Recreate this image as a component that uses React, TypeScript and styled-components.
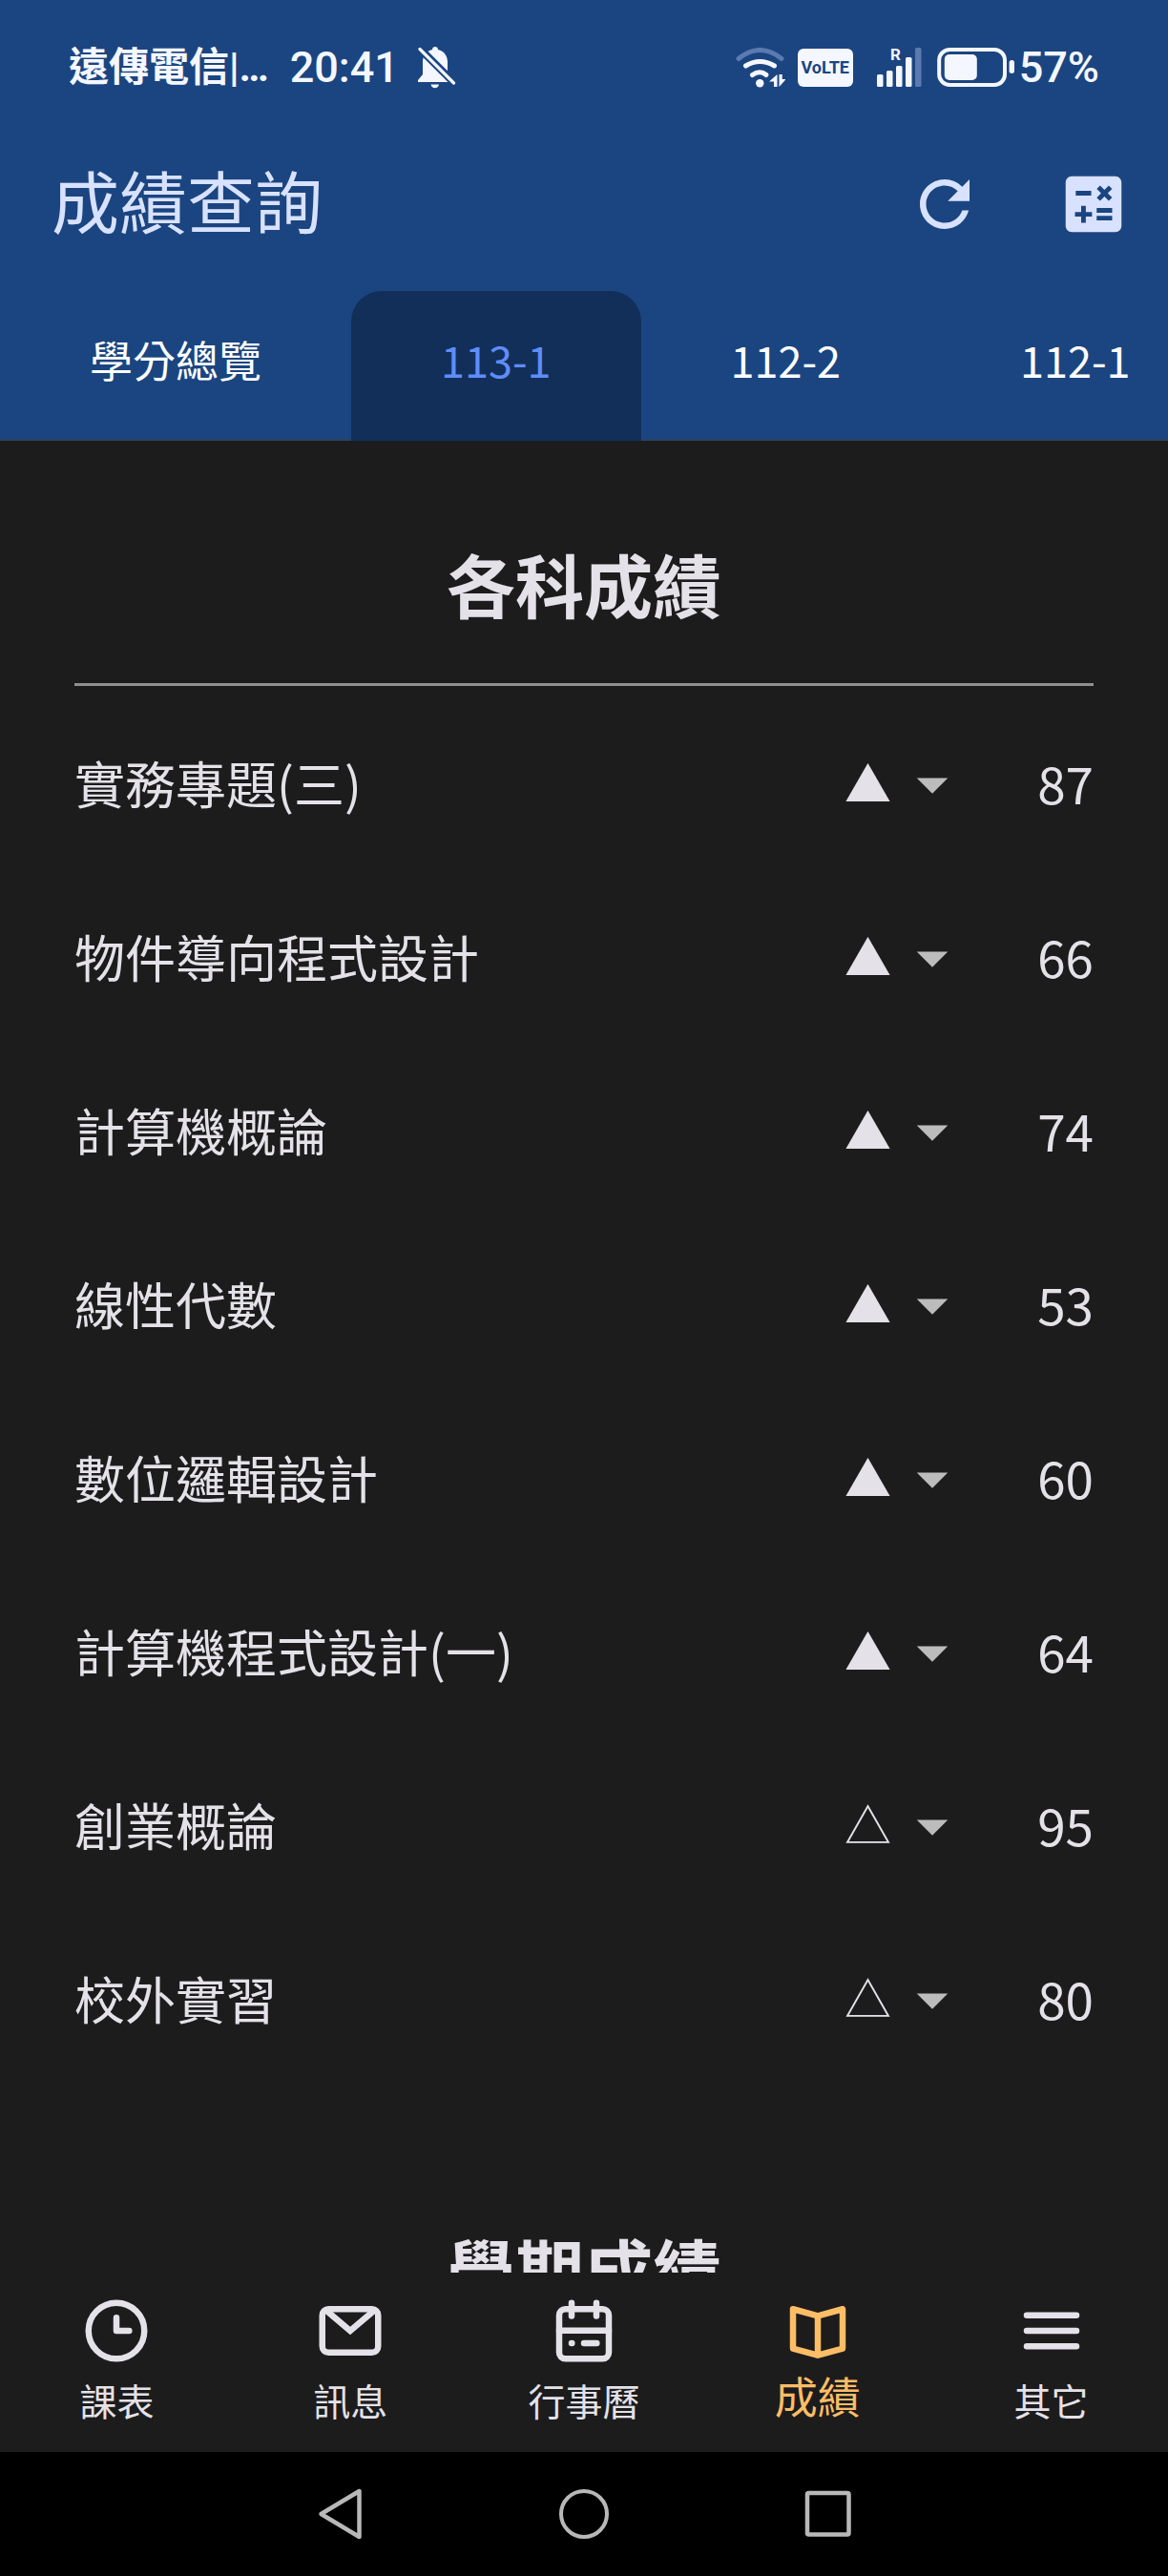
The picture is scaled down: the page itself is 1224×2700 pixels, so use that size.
import React, { useState } from "react";
import styled, { createGlobalStyle } from "styled-components";
import { MdArrowDropDown, MdCalculate, MdRefresh } from "react-icons/md";

const color = {
  header: "#1b4580",
  headerDark: "#122f5a",
  headerLine: "#2e4063",
  headerText: "#d8e2ff",
  accent: "#5f8df8",
  surface: "#1c1c1d",
  text: "#e4e2e8",
  rule: "#8f8e92",
  arrow: "#bcbcbc",
  selected: "#fbbd66",
};

const GlobalStyle = createGlobalStyle`
  * { box-sizing: border-box; }
  body {
    margin: 0;
    background: ${color.surface};
    color: ${color.text};
    font-family: "Noto Sans CJK TC", "Noto Sans", sans-serif;
  }
  button, select { font-family: inherit; }
`;

const Screen = styled.div`
  display: flex;
  flex-direction: column;
  height: 100vh;
`;

const Header = styled.header`
  flex: none;
  background: ${color.header};
`;

const StatusBar = styled.div`
  display: flex;
  align-items: center;
  height: 123px;
  padding: 18px 72px 0;
  color: #f4f7ff;
  font-family: Roboto, "Noto Sans CJK TC", sans-serif;
  font-weight: 500;
  font-size: 45px;
  line-height: 48px;
  white-space: nowrap;
`;

const Carrier = styled.span`
  font-weight: 700;
  font-size: 42px;
`;

const Clock = styled.time`
  margin: 0 20px 0 22px;
`;

const StatusIcons = styled.div`
  display: flex;
  align-items: center;
  margin-left: auto;
`;

const Volte = styled.span`
  width: 58px;
  height: 40px;
  margin: 0 24px 0 13px;
  border-radius: 6px;
  background: #f4f7ff;
  color: ${color.header};
  font-weight: 700;
  font-size: 18px;
  line-height: 40px;
  text-align: center;
`;

const Battery = styled.svg`
  margin: 0 5px 0 16px;
`;

const AppBar = styled.div`
  display: flex;
  align-items: center;
  height: 182px;
  padding-left: 54px;
  color: ${color.headerText};
`;

const Title = styled.h1`
  flex: 1;
  margin: 0;
  padding-bottom: 12px;
  font-weight: 400;
  font-size: 71px;
  line-height: 104px;
`;

const IconButton = styled.button`
  display: flex;
  align-items: center;
  justify-content: center;
  width: 156px;
  height: 156px;
  padding: 0;
  border: 0;
  background: none;
  color: inherit;
`;

const Tabs = styled.div`
  display: flex;
  overflow: hidden;
`;

const Tab = styled.button<{ $active: boolean }>`
  flex: none;
  height: 157px;
  padding: 0 94px 12px;
  border: 0;
  border-bottom: 2px solid ${(p) => (p.$active ? color.headerDark : color.headerLine)};
  border-radius: ${(p) => (p.$active ? "32px 32px 0 0" : "0")};
  background: ${(p) => (p.$active ? color.headerDark : "transparent")};
  color: ${(p) => (p.$active ? color.accent : "#fff")};
  font-size: 45px;
  line-height: 66px;
`;

const Content = styled.main`
  flex: 1;
  min-height: 0;
  padding: 93px 78px 0;
  overflow-y: auto;
  scrollbar-width: none;
`;

const Section = styled.section`
  & + & {
    margin-top: 132px;
  }
`;

const SectionTitle = styled.h2`
  margin: 0 0 14px;
  padding-bottom: 49px;
  border-bottom: 3px solid ${color.rule};
  font-weight: 700;
  font-size: 72px;
  line-height: 112px;
  text-align: center;
`;

const GradeTable = styled.table`
  width: 100%;
  border-collapse: collapse;
  font-size: 53px;
  line-height: 78px;
`;

const Course = styled.th`
  height: 182px;
  padding: 0 0 8px;
  font-weight: 400;
  text-align: left;
`;

const KindCell = styled.td`
  width: 133px;
  padding: 0 0 4px;
`;

const Score = styled.td`
  width: 130px;
  padding: 0 0 8px;
  text-align: right;
`;

const Picker = styled.div`
  position: relative;
  height: 78px;

  svg {
    position: absolute;
    top: 0;
    right: 0;
    color: ${color.arrow};
    pointer-events: none;
  }
`;

const Kind = styled.select`
  display: block;
  width: 100%;
  height: 78px;
  padding: 0 0 6px 2px;
  border: 0;
  appearance: none;
  background: transparent;
  color: ${color.text};
  font-size: 49px;
  line-height: 72px;
`;

const BottomNav = styled.nav`
  display: grid;
  grid-template-columns: repeat(5, 1fr);
  flex: none;
  height: 188px;
`;

const NavItem = styled.a<{ $active: boolean }>`
  display: flex;
  flex-direction: column;
  align-items: center;
  padding-top: 22px;
  color: ${(p) => (p.$active ? color.selected : color.text)};
  font-size: ${(p) => (p.$active ? 45 : 39)}px;
  line-height: ${(p) => (p.$active ? 58 : 66)}px;
  text-decoration: none;
`;

const SystemBar = styled.div`
  display: flex;
  justify-content: center;
  flex: none;
  height: 130px;
  background: #000;
`;

const SystemButton = styled.button`
  display: flex;
  align-items: center;
  justify-content: center;
  width: 256px;
  padding: 0;
  border: 0;
  background: none;
  color: #b8b8b8;
`;

const BellOffIcon = () => (
  <svg width="40" height="44" viewBox="0 0 40 44" aria-label="靜音">
    <path
      fill="currentColor"
      d="M18 0c1.800 0 3 1.200 3 3C27.500 4.500 31 9.500 31 16v13l3 6v2H0v-2l5-6V16C5 9.500 8.500 4.500 15 3c0-1.800 1.200-3 3-3z"
    />
    <path fill="currentColor" d="M13.500 39.500h8.500c-.4 2.400-2 3.700-4.200 3.700s-3.900-1.300-4.300-3.700z" />
    <path d="M-1 -1L41 41" stroke={color.header} strokeWidth="8" />
    <path d="M2 2.500L37.500 38" stroke="currentColor" strokeWidth="3.200" strokeLinecap="round" />
  </svg>
);

const WifiIcon = () => (
  <svg width="52" height="42" viewBox="0 0 52 42" fill="none" strokeWidth="5" strokeLinecap="round" aria-label="Wi-Fi">
    <path d="M3 11.500Q25.300-6.500 48 11.500" stroke="#5a7ab0" />
    <path d="M10.500 19Q25.300 10 40.500 19" stroke="currentColor" />
    <path d="M17.500 28.500Q25.300 23 32 28.500" stroke="currentColor" />
    <circle cx="25.300" cy="37.300" r="4.200" fill="currentColor" />
    <path d="M43.500 28v13H40v-5.500h-5zM45.500 41V28h3.200v5h4z" fill="currentColor" />
  </svg>
);

const bars = [
  { x: 1, y: 28, on: true },
  { x: 11, y: 24, on: true },
  { x: 21, y: 19, on: true },
  { x: 31, y: 10, on: true },
  { x: 41, y: 0, on: false },
];

const SignalIcon = () => (
  <svg width="48" height="42" viewBox="0 0 48 42" overflow="visible" fill="currentColor" aria-label="訊號">
    {bars.map((b) => (
      <rect key={b.x} x={b.x} y={b.y} width="6.500" height={41 - b.y} rx="1.500" fill={b.on ? undefined : "#5a7ab0"} />
    ))}
    <text x="15" y="13" fontSize="17" fontWeight="700">
      R
    </text>
  </svg>
);

const BatteryIcon = () => (
  <Battery width="81" height="42" viewBox="0 0 81 42" aria-label="電量">
    <rect x="2.200" y="2" width="68.800" height="37" rx="11" fill="none" stroke="currentColor" strokeWidth="4" />
    <rect x="7.800" y="7" width="34" height="27" rx="5" fill="currentColor" />
    <rect x="75.600" y="13" width="5.400" height="14" rx="2.700" fill="currentColor" />
  </Battery>
);

const navIcons: Record<string, React.ReactNode> = {
  課表: (
    <>
      <circle cx="12" cy="12" r="9" />
      <path d="M12 7.800V12h4.100" />
    </>
  ),
  訊息: (
    <>
      <rect x="3" y="5" width="18" height="14" rx="2" />
      <path d="M4.200 5.400L12 12l7.800-6.600" strokeLinejoin="miter" />
    </>
  ),
  行事曆: (
    <>
      <rect x="4" y="5" width="16" height="16" rx="2" />
      <path d="M8 3v4.200M16 3v4.200M4 11.900h16M12 16h4.100M8 16h.1" />
    </>
  ),
  成績: <path d="M4 5l8 2.200L20 5v12.700L12 19.900 4 17.700zM12 7.200v12" />,
  其它: <path d="M4 7h16M4 12h16M4 17h16" />,
};

const grades = [
  { course: "實務專題(三)", kind: "▲", score: 87 },
  { course: "物件導向程式設計", kind: "▲", score: 66 },
  { course: "計算機概論", kind: "▲", score: 74 },
  { course: "線性代數", kind: "▲", score: 53 },
  { course: "數位邏輯設計", kind: "▲", score: 60 },
  { course: "計算機程式設計(一)", kind: "▲", score: 64 },
  { course: "創業概論", kind: "△", score: 95 },
  { course: "校外實習", kind: "△", score: 80 },
];

const terms = ["學分總覽", "113-1", "112-2", "112-1"];

export default function App() {
  const [term, setTerm] = useState("113-1");
  const [page, setPage] = useState("成績");

  return (
    <>
      <GlobalStyle />
      <Screen>
        <Header>
          <StatusBar>
            <Carrier>遠傳電信|…</Carrier>
            <Clock>20:41</Clock>
            <BellOffIcon />
            <StatusIcons>
              <WifiIcon />
              <Volte>VoLTE</Volte>
              <SignalIcon />
              <BatteryIcon />
              <span>57%</span>
            </StatusIcons>
          </StatusBar>
          <AppBar>
            <Title>成績查詢</Title>
            <IconButton aria-label="重新整理">
              <MdRefresh size={78} />
            </IconButton>
            <IconButton aria-label="計算">
              <MdCalculate size={78} />
            </IconButton>
          </AppBar>
          <Tabs role="tablist">
            {terms.map((t) => (
              <Tab key={t} role="tab" aria-selected={t === term} $active={t === term} onClick={() => setTerm(t)}>
                {t}
              </Tab>
            ))}
          </Tabs>
        </Header>

        <Content>
          <Section>
            <SectionTitle>各科成績</SectionTitle>
            <GradeTable>
              <tbody>
                {grades.map((g) => (
                  <tr key={g.course}>
                    <Course scope="row">{g.course}</Course>
                    <KindCell>
                      <Picker>
                        <Kind aria-label={g.course} defaultValue={g.kind}>
                          <option>▲</option>
                          <option>△</option>
                        </Kind>
                        <MdArrowDropDown size={78} />
                      </Picker>
                    </KindCell>
                    <Score>{g.score}</Score>
                  </tr>
                ))}
              </tbody>
            </GradeTable>
          </Section>
          <Section>
            <SectionTitle>學期成績</SectionTitle>
          </Section>
        </Content>

        <BottomNav>
          {Object.entries(navIcons).map(([label, icon]) => (
            <NavItem key={label} href="#" $active={label === page} onClick={() => setPage(label)}>
              <svg
                width="78"
                height="78"
                viewBox="0 0 24 24"
                fill="none"
                stroke="currentColor"
                strokeWidth="2"
                strokeLinecap="round"
                strokeLinejoin="round"
                aria-hidden="true"
              >
                {icon}
              </svg>
              <span>{label}</span>
            </NavItem>
          ))}
        </BottomNav>

        <SystemBar>
          <SystemButton aria-label="返回">
            <svg width="56" height="56" viewBox="0 0 56 56" fill="none" stroke="currentColor" strokeWidth="4.500" strokeLinejoin="round">
              <path d="M8.500 28L48.500 4v48z" />
            </svg>
          </SystemButton>
          <SystemButton aria-label="主畫面">
            <svg width="56" height="56" viewBox="0 0 56 56" fill="none" stroke="currentColor" strokeWidth="4">
              <circle cx="28" cy="28" r="24" />
            </svg>
          </SystemButton>
          <SystemButton aria-label="最近使用">
            <svg width="56" height="56" viewBox="0 0 56 56" fill="none" stroke="currentColor" strokeWidth="4.500">
              <rect x="6" y="6" width="43.500" height="43.500" rx="1.500" />
            </svg>
          </SystemButton>
        </SystemBar>
      </Screen>
    </>
  );
}
